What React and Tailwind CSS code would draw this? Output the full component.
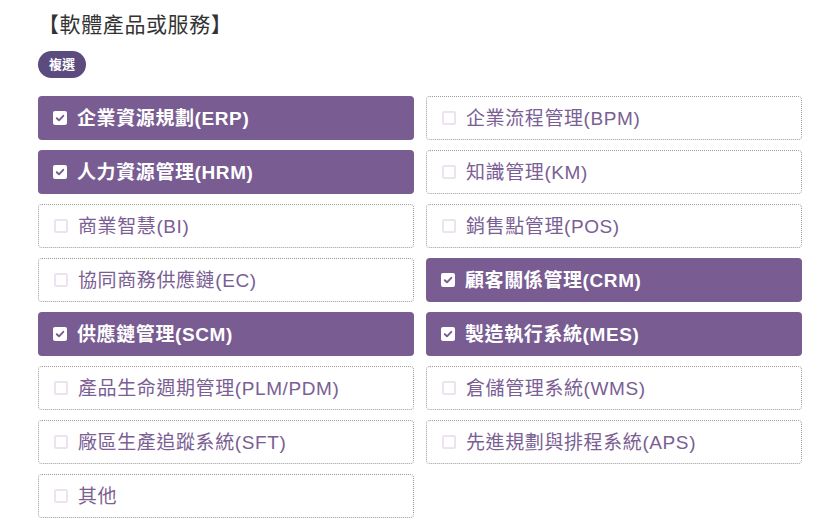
import { useState } from "react";

const OPTIONS = [
  ["企業資源規劃(ERP)", true],
  ["企業流程管理(BPM)", false],
  ["人力資源管理(HRM)", true],
  ["知識管理(KM)", false],
  ["商業智慧(BI)", false],
  ["銷售點管理(POS)", false],
  ["協同商務供應鏈(EC)", false],
  ["顧客關係管理(CRM)", true],
  ["供應鏈管理(SCM)", true],
  ["製造執行系統(MES)", true],
  ["產品生命週期管理(PLM/PDM)", false],
  ["倉儲管理系統(WMS)", false],
  ["廠區生產追蹤系統(SFT)", false],
  ["先進規劃與排程系統(APS)", false],
  ["其他", false],
];

function Option({ label, checked, onToggle }) {
  return (
    <button
      type="button"
      onClick={onToggle}
      className={
        checked
          ? "h-[44px] flex items-center gap-[10px] pl-[15px] rounded-[4px] bg-[#785c92] text-white font-bold text-left"
          : "h-[44px] flex items-center gap-[10px] pl-[15px] rounded-[4px] border border-dotted border-[#9a9a9a] bg-white text-[#7a5e94] text-left"
      }
    >
      {checked ? (
        <span className="w-[14px] h-[14px] rounded-[2px] bg-white flex items-center justify-center">
          <svg width="10" height="10" viewBox="0 0 10 10" fill="none">
            <path d="M1.8 5.2 L4 7.3 L8.3 2.8" stroke="#785c92" strokeWidth="1.9" strokeLinecap="round" strokeLinejoin="round" />
          </svg>
        </span>
      ) : (
        <span className="w-[14px] h-[14px] rounded-[2px] border-2 border-[#ece2f0] bg-white" />
      )}
      <span className="text-[19px] tracking-[0.6px] leading-none">{label}</span>
    </button>
  );
}

export default function App() {
  const [items, setItems] = useState(OPTIONS);

  const toggle = (i) =>
    setItems((prev) => prev.map((it, j) => (j === i ? [it[0], !it[1]] : it)));

  return (
    <div
      className="w-[822px] h-[526px] bg-white pl-[38px] pr-[20px] pt-[11px]"
      style={{ fontFamily: '"Liberation Sans", Arial, "Noto Sans CJK TC", sans-serif' }}
    >
      <h2 className="text-[21px] leading-[28px] text-[#333333] tracking-[0.6px]">
        【軟體產品或服務】
      </h2>
      <div className="mt-[12px] inline-flex items-center justify-center h-[27px] w-[48px] rounded-full bg-[#5b4b7f] text-white text-[13px] font-bold">
        複選
      </div>
      <div className="mt-[18px] grid grid-cols-2 gap-x-[12px] gap-y-[10px] w-[764px]">
        {items.map(([label, checked], i) => (
          <Option key={label} label={label} checked={checked} onToggle={() => toggle(i)} />
        ))}
      </div>
    </div>
  );
}
